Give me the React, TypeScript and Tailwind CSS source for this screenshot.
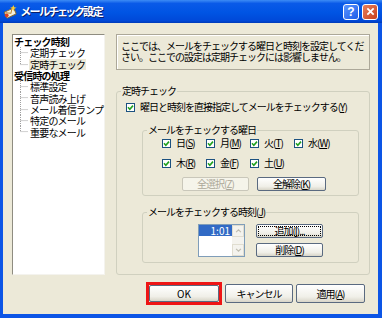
const font = "font-['Noto_Sans_CJK_JP',sans-serif]";

const Check = () => (
  <span className="w-[9px] h-[9px] border border-[#1c5180] bg-white flex items-center justify-center shrink-0">
    <svg viewBox="0 0 7 7" className="w-[7px] h-[7px]">
      <path d="M1 3.3 L2.8 5.2 L6 1.6" fill="none" stroke="#21a121" strokeWidth={1.6} />
    </svg>
  </span>
);

const Btn = ({
  children,
  w,
  disabled,
  focused,
}: {
  children: React.ReactNode;
  w: string;
  disabled?: boolean;
  focused?: boolean;
}) => (
  <div
    className={`${w} h-[14px] rounded-[2px] border flex items-center justify-center text-[10px] leading-none ${
      disabled
        ? "border-[#c9c7ba] bg-[#f5f4ea] text-[#aca899]"
        : "border-[#5a6a80] bg-[linear-gradient(to_bottom,#ffffff,#f0efe8_70%,#d8d5c8)] text-black"
    } ${focused ? "outline outline-1 outline-dotted outline-black -outline-offset-[3px] border-[#003c74]" : ""}`}
  >
    {children}
  </div>
);

const Day = ({ label, k }: { label: string; k: string }) => (
  <div className="w-[44px] flex items-center gap-[5px] text-[10px] leading-[12px]">
    <Check />
    <span className="whitespace-nowrap">
      {label}(<u>{k}</u>)
    </span>
  </div>
);

const TreeChild = ({ text, last, selected }: { text: string; last?: boolean; selected?: boolean }) => (
  <div className="flex h-[11.3px] items-center">
    <svg width="15" height="11.3" className="shrink-0">
      <line x1="6.5" y1="0" x2="6.5" y2={last ? 5.6 : 11.3} stroke="#a0a0a0" strokeDasharray="1 1" />
      <line x1="6.5" y1="5.6" x2="14" y2="5.6" stroke="#a0a0a0" strokeDasharray="1 1" />
    </svg>
    <span className={`px-[1px] whitespace-nowrap leading-[11px] ${selected ? "bg-[#ece9d8]" : ""}`}>{text}</span>
  </div>
);

const App = () => (
  <div className={`w-[382px] h-[318px] flex flex-col ${font} text-[10px] tracking-[-1px] text-black`}>
    <div className="h-[23px] shrink-0 flex items-center bg-[linear-gradient(to_bottom,#3d8cf5_0%,#0a5ae8_15%,#0054e3_55%,#0048d8_90%,#003bb8_100%)] pl-[3px] pr-[4px]">
      <svg viewBox="0 0 16 16" className="w-[15px] h-[15px]">
        <rect x="2" y="6" width="11" height="7" rx="1" fill="#f4f0e0" stroke="#8a6a30" transform="rotate(-25 8 9)" />
        <path d="M3 7 L8 10 L12 5" fill="none" stroke="#c08020" transform="rotate(-25 8 9)" />
        <path d="M11 1 L12 3.5 L14.5 4 L12 5 L11 7.5 L10 5 L7.5 4 L10 3.5Z" fill="#ffd030" />
        <circle cx="4" cy="12" r="2" fill="#e04020" />
      </svg>
      <span className="ml-[3px] text-white font-bold text-[11px] leading-[13px] tracking-[-1.2px] [font-feature-settings:'palt'] [text-shadow:1px_1px_0_#0a1e6a]">
        メールチェック設定
      </span>
      <div className="ml-auto flex gap-[3px]">
        <div className="w-[16px] h-[16px] rounded-[3px] border border-white bg-[linear-gradient(135deg,#5a95ff,#1d5ce8)] flex items-center justify-center text-white font-bold text-[12px] leading-none font-['Liberation_Sans',sans-serif] tracking-normal">
          ?
        </div>
        <div className="w-[16px] h-[16px] rounded-[3px] border border-white bg-[linear-gradient(135deg,#e8805c,#c8401c)] flex items-center justify-center">
          <svg viewBox="0 0 10 10" className="w-[9px] h-[9px]">
            <path d="M1.5 1.5 L8.5 8.5 M8.5 1.5 L1.5 8.5" stroke="white" strokeWidth={2} />
          </svg>
        </div>
      </div>
    </div>
    <div className="flex-1 flex flex-col bg-[#ece9d8] border-l-[3px] border-r-[4px] border-b-[4px] border-[#0c55e6] pt-[11px] pl-[9px] pr-[8px]">
      <div className="flex gap-[11px]">
        <div className="w-[93px] h-[241px] bg-white border border-t-[#8e8c80] border-l-[#8e8c80] border-r-[#f4f3ee] border-b-[#f4f3ee] pt-[1px] pl-[1px] leading-[11px] tracking-[-0.8px]">
          <div className="font-bold h-[11.3px] flex items-center">チェック時刻</div>
          <TreeChild text="定期チェック" />
          <TreeChild text="定時チェック" last selected />
          <div className="font-bold h-[11.3px] flex items-center">受信時の処理</div>
          <TreeChild text="標準設定" />
          <TreeChild text="音声読み上げ" />
          <TreeChild text="メール着信ランプ" />
          <TreeChild text="特定のメール" />
          <TreeChild text="重要なメール" last />
        </div>
        <div className="w-[254px] flex flex-col">
          <div className="h-[36px] border border-[#aca899] shadow-[inset_1px_1px_0_#fff] pl-[4px] pt-[5px] leading-[11px] whitespace-nowrap">
            ここでは、メールをチェックする曜日と時刻を設定してくだ
            <br />
            さい。ここでの設定は定期チェックには影響しません。
          </div>
          <fieldset className="mt-[15px] border border-[#d0d0bf] rounded-[3px] pb-[11px]">
            <legend className="ml-[4px] px-[1px] leading-[12px]">定時チェック</legend>
            <div className="px-[9px]">
              <div className="mt-[4px] flex items-center gap-[5px] leading-[12px]">
                <Check />
                <span>
                  曜日と時刻を直接指定してメールをチェックする(<u>Y</u>)
                </span>
              </div>
              <fieldset className="mt-[11px] ml-[16px] mr-[1px] border border-[#d0d0bf] rounded-[3px] pb-[4px]">
                <legend className="ml-[4px] px-[1px] leading-[12px]">メールをチェックする曜日</legend>
                <div className="pl-[19px]">
                  <div className="mt-[1px] flex">
                    <Day label="日" k="S" />
                    <Day label="月" k="M" />
                    <Day label="火" k="T" />
                    <Day label="水" k="W" />
                  </div>
                  <div className="mt-[8px] flex">
                    <Day label="木" k="R" />
                    <Day label="金" k="F" />
                    <Day label="土" k="U" />
                  </div>
                  <div className="mt-[8px] ml-[20px] flex gap-[8px]">
                    <Btn w="w-[67px]" disabled>
                      全選択(<u>Z</u>)
                    </Btn>
                    <Btn w="w-[69px]">
                      全解除(<u>K</u>)
                    </Btn>
                  </div>
                </div>
              </fieldset>
              <fieldset className="mt-[10px] ml-[16px] mr-[1px] border border-[#d0d0bf] rounded-[3px] pb-[5px]">
                <legend className="ml-[4px] px-[1px] leading-[12px]">
                  メールをチェックする時刻(<u>J</u>)
                </legend>
                <div className="mt-[6px] ml-[55px] flex gap-[11px]">
                  <div className="w-[47px] h-[33px] border border-[#7f9db9] bg-white flex">
                    <div className="flex-1">
                      <div className="h-[11px] bg-[#316ac5] text-white text-right pr-[2px] leading-[11px] tracking-normal">1:01</div>
                    </div>
                    <div className="w-[12px] flex flex-col justify-between bg-[#f4f3ee]">
                      <div className="h-[12px] border border-[#e0ddd0] flex items-center justify-center">
                        <svg viewBox="0 0 8 5" className="w-[7px] h-[4px]">
                          <path d="M1 4 L4 1 L7 4" fill="none" stroke="#c0bdb0" strokeWidth={1.4} />
                        </svg>
                      </div>
                      <div className="h-[12px] border border-[#e0ddd0] flex items-center justify-center">
                        <svg viewBox="0 0 8 5" className="w-[7px] h-[4px]">
                          <path d="M1 1 L4 4 L7 1" fill="none" stroke="#c0bdb0" strokeWidth={1.4} />
                        </svg>
                      </div>
                    </div>
                  </div>
                  <div className="flex flex-col gap-[5px]">
                    <Btn w="w-[67px]" focused>
                      追加(<u>I</u>)...
                    </Btn>
                    <Btn w="w-[67px]">
                      削除(<u>D</u>)
                    </Btn>
                  </div>
                </div>
              </fieldset>
            </div>
          </fieldset>
        </div>
      </div>
      <div className="mt-[7px] flex justify-end pr-[5px]">
        <div className="border-[3px] border-[#ee1515] p-0">
          <div className="w-[70px] h-[17px] rounded-[2px] border border-[#5a6a80] bg-[linear-gradient(to_bottom,#ffffff,#f0efe8_70%,#d8d5c8)] flex items-center justify-center text-[10px] tracking-normal">
            OK
          </div>
        </div>
        <div className="ml-[3px] mt-[2px] w-[68px] h-[19px] rounded-[2px] border border-[#5a6a80] bg-[linear-gradient(to_bottom,#ffffff,#f0efe8_70%,#d8d5c8)] flex items-center justify-center">
          キャンセル
        </div>
        <div className="ml-[3px] mt-[2px] w-[69px] h-[19px] rounded-[2px] border border-[#5a6a80] bg-[linear-gradient(to_bottom,#ffffff,#f0efe8_70%,#d8d5c8)] flex items-center justify-center">
          適用(<u>A</u>)
        </div>
      </div>
    </div>
  </div>
);

export default App;
